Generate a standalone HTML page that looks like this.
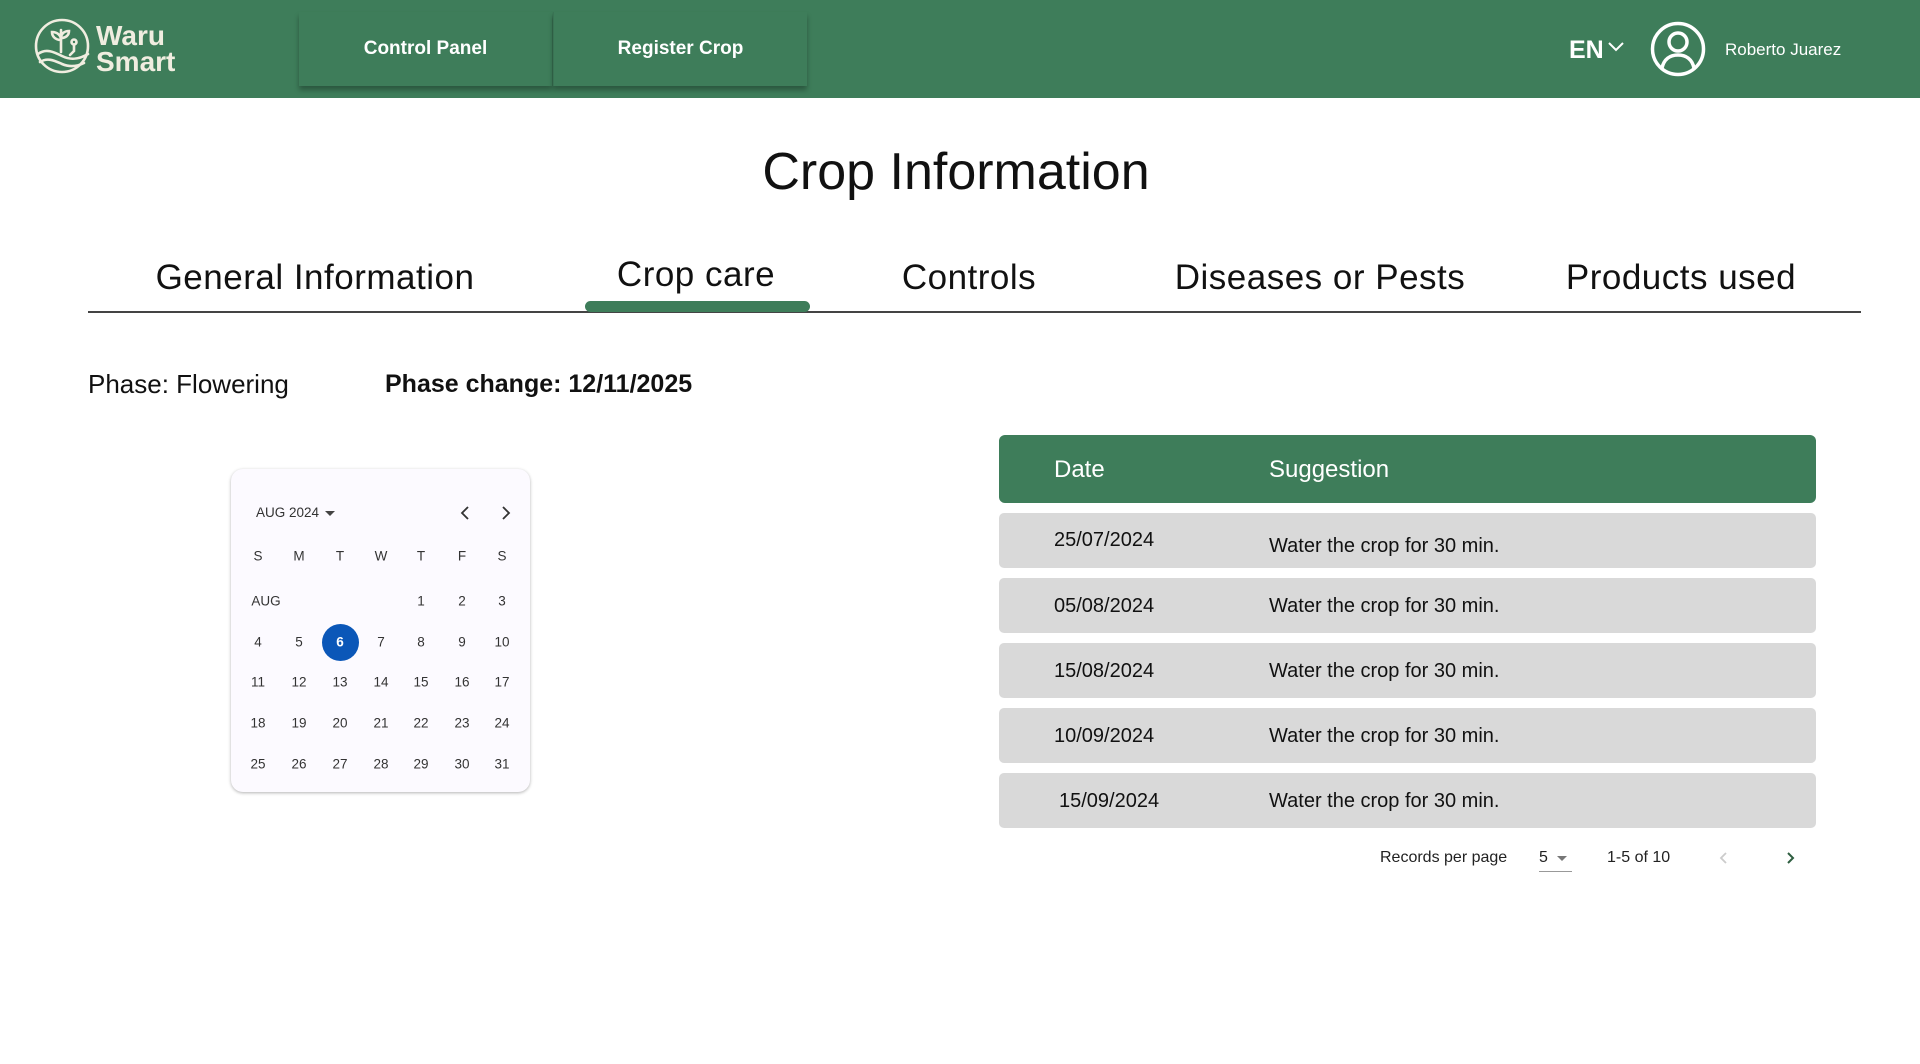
<!DOCTYPE html>
<html><head><meta charset="utf-8"><style>
*{margin:0;padding:0;box-sizing:border-box}
body{width:1920px;height:1064px;background:#fff;position:relative;overflow:hidden;font-family:"Liberation Sans",sans-serif;color:#111}
.a{position:absolute;white-space:nowrap}
.hdr{position:absolute;left:0;top:0;width:1920px;height:98px;background:#3e7d5a}
.nav{position:absolute;top:12px;height:74px;background:#3e7d5a;box-shadow:0 4px 5px rgba(0,0,0,.3);color:#fff;font-weight:bold;font-size:19px;display:flex;align-items:center;justify-content:center}
.c{transform:translateX(-50%)}
.tab{position:absolute;top:258px;font-size:35px;color:#111;transform:translateX(-50%);white-space:nowrap;letter-spacing:.5px}
.row{position:absolute;left:999px;width:817px;height:55px;background:#d9d9d9;border-radius:5px;font-size:20px;color:#111}
.row span{position:absolute;top:17px}
.cal{position:absolute;left:231px;top:469px;width:299px;height:323px;background:#fcfaff;border-radius:12px;box-shadow:0 1px 3px rgba(0,0,0,.3)}
.d{position:absolute;width:30px;margin-left:-15px;text-align:center;font-size:13.5px;color:#333;transform:translateY(-50%)}
</style></head><body>
<div class="hdr"></div>
<svg class="a" style="left:34px;top:16px" width="58" height="60" viewBox="0 0 58 60" fill="none" stroke="#f0ede0" stroke-width="2.6" stroke-linecap="round">
<circle cx="28" cy="30" r="26"/>
<path d="M27 14v22M27 24c-6 0-9-4-9-8 5 0 9 3 9 8M27 22c5 0 8-3 8-7-5 0-8 3-8 7"/>
<circle cx="40" cy="26" r="2.5"/><path d="M40 29v6l-4 4"/>
<path d="M4 38c8-6 16-2 24 2s16 4 26-2M6 46c8-5 15-1 22 2s14 3 22-1"/>
</svg>
<div class="a" style="left:96px;top:23px;color:#f0ede0;font-weight:bold;font-size:28px;line-height:26px">Waru<br>Smart</div>
<div class="nav" style="left:299px;width:253px">Control Panel</div>
<div class="nav" style="left:553px;width:254px;border-left:1px solid #3a7354">Register Crop</div>
<div class="a" style="left:1569px;top:36px;color:#fff;font-weight:bold;font-size:25px">EN</div>
<svg class="a" style="left:1607px;top:41px" width="18" height="12" viewBox="0 0 18 12"><path d="M2 2l7 7 7-7" fill="none" stroke="#fff" stroke-width="2"/></svg>
<svg class="a" style="left:1650px;top:21px" width="56" height="56" viewBox="0 0 56 56" fill="none" stroke="#fff" stroke-width="3.5"><circle cx="28" cy="28" r="25.5"/><circle cx="28" cy="21" r="9"/><path d="M12 47c2-9 8-13 16-13s14 4 16 13"/></svg>
<div class="a" style="left:1725px;top:40px;color:#fff;font-size:17px">Roberto Juarez</div>

<div class="a c" style="left:956px;top:142px;font-size:52px;color:#111">Crop Information</div>
<div class="tab" style="left:315px">General Information</div>
<div class="tab" style="left:696px;top:255px">Crop care</div>
<div class="tab" style="left:969px">Controls</div>
<div class="tab" style="left:1320px">Diseases or Pests</div>
<div class="tab" style="left:1681px">Products used</div>
<div class="a" style="left:88px;top:311px;width:1773px;height:2px;background:#444"></div>
<div class="a" style="left:585px;top:301px;width:225px;height:11px;background:#3e7d5a;border-radius:6px"></div>

<div class="a" style="left:88px;top:369px;font-size:26px">Phase: Flowering</div>
<div class="a" style="left:385px;top:370px;font-size:25px;font-weight:bold">Phase change: 12/11/2025</div>

<div class="cal"></div>
<div class="a" style="left:256px;top:505px;font-size:13.5px;color:#333">AUG 2024</div>
<svg class="a" style="left:325px;top:511px" width="10" height="6"><path d="M0 0h10L5 5z" fill="#444"/></svg>
<svg class="a" style="left:458px;top:505px" width="14" height="16" viewBox="0 0 14 16"><path d="M10 2L4 8l6 6" fill="none" stroke="#333" stroke-width="1.8"/></svg>
<svg class="a" style="left:499px;top:505px" width="14" height="16" viewBox="0 0 14 16"><path d="M4 2l6 6-6 6" fill="none" stroke="#333" stroke-width="1.8"/></svg>
<div class="a" style="left:322px;top:624px;width:37px;height:37px;border-radius:50%;background:#0b57b8"></div>

<div class="a" style="left:999px;top:435px;width:817px;height:68px;background:#3e7d5a;border-radius:6px"></div>
<div class="a" style="left:1054px;top:456px;color:#fff;font-size:24px">Date</div>
<div class="a" style="left:1269px;top:456px;color:#fff;font-size:24px">Suggestion</div>
<div class="row" style="top:513px"><span style="left:55px;top:16px">25/07/2024</span><span style="left:270px;top:22px">Water the crop for 30 min.</span></div>
<div class="row" style="top:578px"><span style="left:55px">05/08/2024</span><span style="left:270px">Water the crop for 30 min.</span></div>
<div class="row" style="top:643px"><span style="left:55px">15/08/2024</span><span style="left:270px">Water the crop for 30 min.</span></div>
<div class="row" style="top:708px"><span style="left:55px">10/09/2024</span><span style="left:270px">Water the crop for 30 min.</span></div>
<div class="row" style="top:773px"><span style="left:60px">15/09/2024</span><span style="left:270px">Water the crop for 30 min.</span></div>

<div class="a" style="left:1380px;top:849px;font-size:16px;color:#222">Records per page</div>
<div class="a" style="left:1539px;top:849px;font-size:16px;color:#222">5</div>
<svg class="a" style="left:1557px;top:856px" width="10" height="6"><path d="M0 0h10L5 5z" fill="#777"/></svg>
<div class="a" style="left:1539px;top:871px;width:33px;height:1px;background:#999"></div>
<div class="a" style="left:1607px;top:849px;font-size:16px;color:#222">1-5 of 10</div>
<svg class="a" style="left:1719px;top:851px" width="10" height="14"><path d="M7 2L2 7l5 5" fill="none" stroke="#ccc" stroke-width="1.8"/></svg>
<svg class="a" style="left:1785px;top:851px" width="10" height="14"><path d="M3 2l5 5-5 5" fill="none" stroke="#2e5e40" stroke-width="2"/></svg>

<div class="d" style="left:258px;top:556px">S</div><div class="d" style="left:299px;top:556px">M</div><div class="d" style="left:340px;top:556px">T</div><div class="d" style="left:381px;top:556px">W</div><div class="d" style="left:421px;top:556px">T</div><div class="d" style="left:462px;top:556px">F</div><div class="d" style="left:502px;top:556px">S</div>
<div class="d" style="left:266px;top:601px">AUG</div>
<div class="d" style="left:421px;top:601px">1</div><div class="d" style="left:462px;top:601px">2</div><div class="d" style="left:502px;top:601px">3</div>
<div class="d" style="left:258px;top:642px">4</div><div class="d" style="left:299px;top:642px">5</div><div class="d" style="left:340px;top:642px;color:#fff;font-weight:bold">6</div><div class="d" style="left:381px;top:642px">7</div><div class="d" style="left:421px;top:642px">8</div><div class="d" style="left:462px;top:642px">9</div><div class="d" style="left:502px;top:642px">10</div>
<div class="d" style="left:258px;top:682px">11</div><div class="d" style="left:299px;top:682px">12</div><div class="d" style="left:340px;top:682px">13</div><div class="d" style="left:381px;top:682px">14</div><div class="d" style="left:421px;top:682px">15</div><div class="d" style="left:462px;top:682px">16</div><div class="d" style="left:502px;top:682px">17</div>
<div class="d" style="left:258px;top:723px">18</div><div class="d" style="left:299px;top:723px">19</div><div class="d" style="left:340px;top:723px">20</div><div class="d" style="left:381px;top:723px">21</div><div class="d" style="left:421px;top:723px">22</div><div class="d" style="left:462px;top:723px">23</div><div class="d" style="left:502px;top:723px">24</div>
<div class="d" style="left:258px;top:764px">25</div><div class="d" style="left:299px;top:764px">26</div><div class="d" style="left:340px;top:764px">27</div><div class="d" style="left:381px;top:764px">28</div><div class="d" style="left:421px;top:764px">29</div><div class="d" style="left:462px;top:764px">30</div><div class="d" style="left:502px;top:764px">31</div>
</body></html>
